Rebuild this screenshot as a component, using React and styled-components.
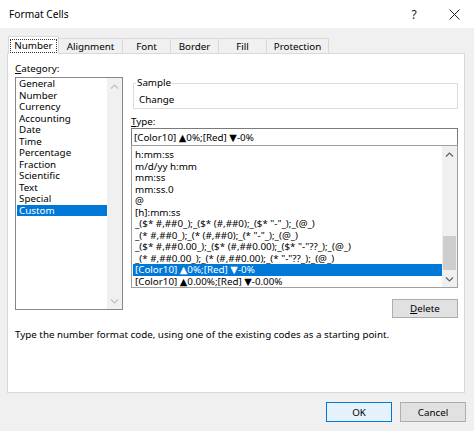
import styled, { createGlobalStyle } from 'styled-components';

const GlobalStyle = createGlobalStyle`
    html, body {
        margin: 0;
        padding: 0;
        background: #f0f0f0;
    }

    body {
        font-family: "Noto Sans", "DejaVu Sans", sans-serif;
        font-size: 9.8px;
        color: #000;
    }
`;

const categories = [
    'General',
    'Number',
    'Currency',
    'Accounting',
    'Date',
    'Time',
    'Percentage',
    'Fraction',
    'Scientific',
    'Text',
    'Special',
    'Custom',
];

const formats = [
    'h:mm:ss',
    'm/d/yy h:mm',
    'mm:ss',
    'mm:ss.0',
    '@',
    '[h]:mm:ss',
    '_($* #,##0_);_($* (#,##0);_($* "-"_);_(@_)',
    '_(* #,##0_);_(* (#,##0);_(* "-"_);_(@_)',
    '_($* #,##0.00_);_($* (#,##0.00);_($* "-"??_);_(@_)',
    '_(* #,##0.00_);_(* (#,##0.00);_(* "-"??_);_(@_)',
    '[Color10] ▲0%;[Red] ▼-0%',
    '[Color10] ▲0.00%;[Red] ▼-0.00%',
];

const tabs = [
    { label: 'Number', width: 51 },
    { label: 'Alignment', width: 65 },
    { label: 'Font', width: 49 },
    { label: 'Border', width: 49 },
    { label: 'Fill', width: 49 },
    { label: 'Protection', width: 63 },
];

const Dialog = styled.div`
    width: 474px;
    height: 431px;
    display: flex;
    flex-direction: column;
    background: #f0f0f0;
    overflow: hidden;
`;

const TitleBar = styled.div`
    height: 28px;
    display: flex;
    align-items: center;
    padding: 0 0 0 9px;
    background: #fff;
    font-size: 10.2px;
`;

const Title = styled.div`
    flex: 1;
`;

const TitleButton = styled.div`
    width: 40px;
    height: 28px;
    display: flex;
    align-items: center;
    justify-content: center;
    font-size: 12px;
    color: #222;
`;

const Body = styled.div`
    flex: 1;
    display: flex;
    flex-direction: column;
    padding: 0 9px 0 7px;
`;

const TabRow = styled.div`
    display: flex;
    align-items: flex-end;
    height: 25px;
    padding-left: 1px;
`;

const Tab = styled.div`
    position: relative;
    z-index: ${({ $active }) => ($active ? 1 : 0)};
    box-sizing: border-box;
    width: ${({ $w }) => $w}px;
    height: ${({ $active }) => ($active ? 18 : 15)}px;
    margin-left: -1px;
    margin-bottom: ${({ $active }) => ($active ? -1 : 0)}px;
    display: flex;
    align-items: center;
    justify-content: center;
    background: ${({ $active }) => ($active ? '#fff' : '#f0f0f0')};
    border: 1px solid #d9d9d9;
    border-bottom: none;
    white-space: nowrap;

    &:first-child {
        margin-left: 0;
    }
`;

const FocusRing = styled.span`
    padding: 0 3px;
    line-height: 12px;
    border: 1px dotted #333;
`;

const Panel = styled.div`
    box-sizing: border-box;
    height: 340px;
    display: flex;
    flex-direction: column;
    padding: 9px 6px 0 7px;
    background: #fff;
    border: 1px solid #d9d9d9;
`;

const Main = styled.div`
    display: grid;
    grid-template-columns: 108px 1fr;
    grid-template-rows: auto auto;
    column-gap: 8px;
    row-gap: 2px;
    align-items: start;
`;

const Label = styled.div`
    line-height: 12px;
    margin-top: ${({ $mt }) => $mt || 0}px;

    u {
        text-decoration: underline;
        text-underline-offset: 1px;
    }
`;

const ListBox = styled.div`
    box-sizing: border-box;
    height: ${({ $h }) => $h}px;
    margin-top: ${({ $mt }) => $mt || 0}px;
    display: flex;
    border: 1px solid ${({ $border }) => $border};
    background: #fff;
`;

const Items = styled.div`
    flex: 1;
    min-width: 0;
    padding: ${({ $pt }) => $pt}px 0 0 1px;
`;

const Item = styled.div`
    height: 11.5px;
    line-height: 11.5px;
    padding-left: ${({ $pl }) => $pl}px;
    white-space: nowrap;
    background: ${({ $selected }) => ($selected ? '#0078d7' : 'transparent')};
    color: ${({ $selected }) => ($selected ? '#fff' : '#000')};
`;

const ScrollTrack = styled.div`
    width: 15px;
    display: flex;
    flex-direction: column;
    background: #f0f0f0;
`;

const ScrollArrow = styled.div`
    height: 17px;
    display: flex;
    align-items: center;
    justify-content: center;
    color: ${({ $enabled }) => ($enabled ? '#606060' : '#bfbfbf')};
`;

const ScrollSpace = styled.div`
    flex: 1;
    display: flex;
    flex-direction: column;
    justify-content: flex-end;
`;

const Thumb = styled.div`
    height: 34px;
    margin: 0 1px;
    background: #cdcdcd;
`;

const RightColumn = styled.div`
    display: flex;
    flex-direction: column;
`;

const SampleBox = styled.fieldset`
    margin: 0 0 0 2px;
    padding: 0 0 2px 2px;
    border: 1px solid #dcdcdc;
    min-width: 0;
`;

const Legend = styled.legend`
    padding: 0 1px;
    line-height: 12px;
`;

const SampleText = styled.div`
    margin-top: 5px;
    padding-left: 3px;
    line-height: 12px;
`;

const TypeInput = styled.div`
    box-sizing: border-box;
    height: 18px;
    padding-left: 2px;
    display: flex;
    align-items: center;
    border: 1px solid #7a7a7a;
    white-space: nowrap;
`;

const Button = styled.div`
    box-sizing: border-box;
    width: 66px;
    height: ${({ $h }) => $h || 20}px;
    display: flex;
    align-items: center;
    justify-content: center;
    background: ${({ $default }) => ($default ? '#e5f1fb' : '#e1e1e1')};
    border: 1px solid ${({ $default }) => ($default ? '#0078d7' : '#adadad')};

    u {
        text-underline-offset: 1px;
    }
`;

const DeleteRow = styled.div`
    display: flex;
    justify-content: flex-end;
    margin-top: 11px;
`;

const Hint = styled.div`
    margin-top: 11px;
    line-height: 12px;
`;

const Footer = styled.div`
    display: flex;
    justify-content: flex-end;
    gap: 8px;
    margin: 9px -1px 0 0;
`;

const Chevron = ({ down }) => (
    <svg width="9" height="6" viewBox="0 0 9 6">
        <path
            d={down ? 'M1 1.5 L4.5 5 L8 1.5' : 'M1 4.5 L4.5 1 L8 4.5'}
            fill="none"
            stroke="currentColor"
            strokeWidth="1.2"
        />
    </svg>
);

const CloseIcon = () => (
    <svg width="11" height="11" viewBox="0 0 11 11">
        <path d="M0.5 0.5 L10.5 10.5 M10.5 0.5 L0.5 10.5" stroke="#222" strokeWidth="1" />
    </svg>
);

const ScrollBar = ({ enabled, thumb }) => (
    <ScrollTrack>
        <ScrollArrow $enabled={enabled}>
            <Chevron />
        </ScrollArrow>
        <ScrollSpace>{thumb && <Thumb />}</ScrollSpace>
        <ScrollArrow $enabled={enabled}>
            <Chevron down />
        </ScrollArrow>
    </ScrollTrack>
);

export default function App() {
    return (
        <>
            <GlobalStyle />
            <Dialog>
                <TitleBar>
                    <Title>Format Cells</Title>
                    <TitleButton>?</TitleButton>
                    <TitleButton>
                        <CloseIcon />
                    </TitleButton>
                </TitleBar>
                <Body>
                    <TabRow>
                        {tabs.map((t, i) => (
                            <Tab key={t.label} $w={t.width} $active={i === 0}>
                                {i === 0 ? <FocusRing>{t.label}</FocusRing> : t.label}
                            </Tab>
                        ))}
                    </TabRow>
                    <Panel>
                        <Main>
                            <Label>
                                <u>C</u>ategory:
                            </Label>
                            <div />
                            <ListBox $h={233} $border="#828790">
                                <Items $pt={0}>
                                    {categories.map((c) => (
                                        <Item key={c} $pl={2} $selected={c === 'Custom'}>
                                            {c}
                                        </Item>
                                    ))}
                                </Items>
                                <ScrollBar />
                            </ListBox>
                            <RightColumn>
                                <SampleBox>
                                    <Legend>Sample</Legend>
                                    <SampleText>Change</SampleText>
                                </SampleBox>
                                <Label $mt={7}>
                                    <u>T</u>ype:
                                </Label>
                                <TypeInput>[Color10] ▲0%;[Red] ▼-0%</TypeInput>
                                <ListBox $h={143} $mt={-1} $border="#a0a0a0">
                                    <Items $pt={3}>
                                        {formats.map((f, i) => (
                                            <Item key={f} $pl={2} $selected={i === 10}>
                                                {f}
                                            </Item>
                                        ))}
                                    </Items>
                                    <ScrollBar enabled thumb />
                                </ListBox>
                                <DeleteRow>
                                    <Button $h={19}>
                                        <span>
                                            <u>D</u>elete
                                        </span>
                                    </Button>
                                </DeleteRow>
                            </RightColumn>
                        </Main>
                        <Hint>
                            Type the number format code, using one of the existing codes as a
                            starting point.
                        </Hint>
                    </Panel>
                    <Footer>
                        <Button $default>OK</Button>
                        <Button>Cancel</Button>
                    </Footer>
                </Body>
            </Dialog>
        </>
    );
}
